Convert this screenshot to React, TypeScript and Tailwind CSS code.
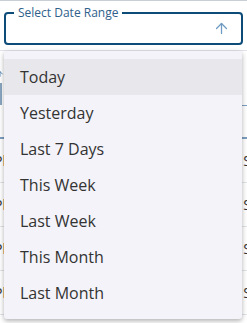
import React, { useState } from "react";
import { ArrowUp } from "lucide-react";

const OPTIONS = [
  "Today",
  "Yesterday",
  "Last 7 Days",
  "This Week",
  "Last Week",
  "This Month",
  "Last Month",
];

const ROWS = ["Plan A", "Plan B", "Plan C", "Plan D"];

const App = () => {
  const [active, setActive] = useState(0);

  return (
    <div
      className="relative w-[247px] h-[323px] overflow-hidden bg-white border-t border-[#c9ced6]"
      style={{ fontFamily: '"Open Sans", "Noto Sans", sans-serif' }}
    >
      {/* date range field */}
      <div className="px-[4px] pt-[5px]">
        <fieldset className="h-[40px] border-2 border-[#0d4c78] rounded-[4px] px-[8px] -mt-[1px] flex items-center justify-end pr-[11px]">
          <legend className="px-[4px] text-[12px] leading-[16px] text-[#2f618b]">
            Select Date Range
          </legend>
          <ArrowUp className="w-[17px] h-[17px] text-[#6f9bc2] -mt-[7px]" strokeWidth={1.8} />
        </fieldset>
      </div>

      {/* table behind the menu */}
      <div className="mt-[5px] border-t border-[#e1e4e8]">
        <div className="h-[86px] flex items-start justify-between">
          <div className="flex flex-col pt-[18px] -ml-[4px]">
            <ArrowUp className="w-[8px] h-[10px] text-[#3a77ad]" strokeWidth={2.5} />
            <div className="w-[2px] h-[22px] ml-[4px] mt-[4px] bg-[#8aa6c1]" />
          </div>
          <div className="flex flex-col pt-[54px] w-[6px]">
            <div className="h-[1px] bg-[#7d9ec0]" />
          </div>
        </div>
        <div className="border-t-2 border-[#7d9ec0]">
          {ROWS.map((r) => (
            <div
              key={r}
              className="h-[44px] flex items-center justify-between border-b border-[#e1e4e8] text-[14px] text-[#333]"
            >
              <span className="-ml-[6px]">Pl</span>
              <span className="-mr-[4px]">S</span>
            </div>
          ))}
        </div>
      </div>

      {/* dropdown menu */}
      <ul className="absolute left-[4px] top-[50px] w-[238px] py-[8px] bg-[#f4f3f9] rounded-[3px] shadow-[0_2px_4px_rgba(0,0,0,0.25),0_1px_8px_rgba(0,0,0,0.08)]">
        {OPTIONS.map((o, i) => (
          <li
            key={o}
            onMouseEnter={() => setActive(i)}
            className={`h-[36px] flex items-center px-[16px] text-[16px] text-[#333333] cursor-pointer ${
              active === i ? "bg-[#e7e7ec]" : ""
            }`}
          >
            {o}
          </li>
        ))}
      </ul>
    </div>
  );
};

export default App;
